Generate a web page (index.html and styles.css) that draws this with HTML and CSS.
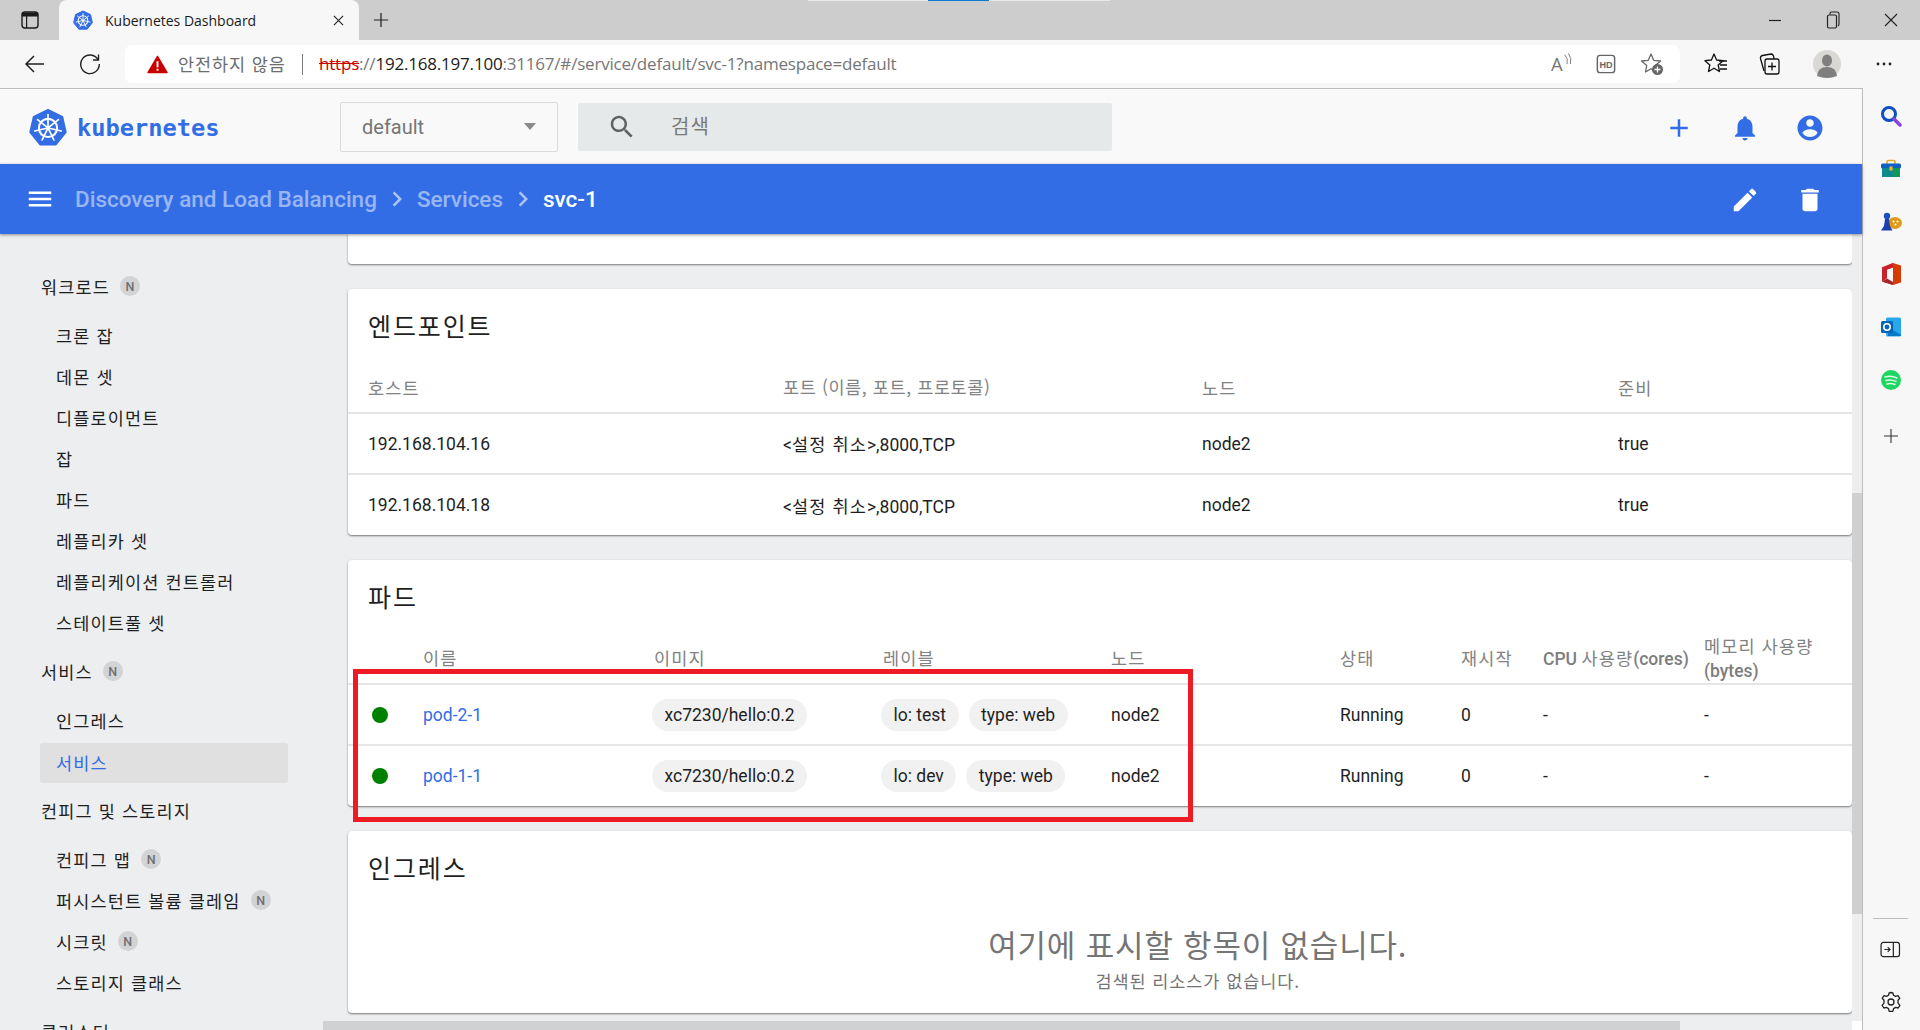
FILE: index.html
```html
<!DOCTYPE html>
<html lang="ko">
<head>
<meta charset="utf-8">
<title>Kubernetes Dashboard</title>
<link rel="stylesheet" href="styles.css">
</head>
<body>
<svg class="defs" width="0" height="0">
  <symbol id="k8s" viewBox="0 0 40 40">
    <path d="M20 2 35 9.2 38.7 25.4 28.3 38.4H11.7L1.3 25.4 5 9.2Z" fill="#326de6" stroke="#326de6" stroke-width="2" stroke-linejoin="round"/>
    <circle cx="20" cy="21" r="9.6" fill="none" stroke="#fff" stroke-width="2.2"/>
    <circle cx="20" cy="21" r="2.4" fill="#fff"/>
    <path d="M20 7V18.5M31 12.2 22 19.4M34 24.2 22.5 21.6M26.2 33.6 21.1 23.3M13.8 33.6 18.9 23.3M6 24.2 17.5 21.6M9 12.2 18 19.4" stroke="#fff" stroke-width="1.8" stroke-linecap="round" fill="none"/>
  </symbol>
</svg>

<div class="titlebar">
  <span class="capture-strip"></span>
  <div class="tabs-btn">
    <svg viewBox="0 0 20 20" class="i20"><rect x="2" y="2" width="16" height="16" rx="3" fill="none" stroke="#1b1b1b" stroke-width="1.4"/><path d="M2.5 3h15v3h-15zM6.6 6v12" fill="#1b1b1b" stroke="#1b1b1b" stroke-width="1.2"/></svg>
  </div>
  <div class="tab">
    <svg class="favicon"><use href="#k8s"/></svg>
    <span class="tab-title">Kubernetes Dashboard</span>
    <svg viewBox="0 0 12 12" class="tab-close"><path d="M1 1 11 11M11 1 1 11" stroke="#222" stroke-width="1.2"/></svg>
  </div>
  <svg viewBox="0 0 18 18" class="newtab"><path d="M9 1V17M1 9H17" stroke="#222" stroke-width="1.4"/></svg>
  <div class="winbtns">
    <svg viewBox="0 0 14 14" class="i14"><path d="M1 7.5H13" stroke="#222" stroke-width="1.2"/></svg>
    <svg viewBox="0 0 14 18" class="i14 tall"><rect x="1.5" y="4" width="9" height="13" rx="1.5" fill="none" stroke="#222" stroke-width="1.2"/><path d="M4 3.5V2.5Q4 1 5.5 1H11Q13 1 13 3V13Q13 14.500 12 15" fill="none" stroke="#222" stroke-width="1.1"/></svg>
    <svg viewBox="0 0 14 14" class="i14"><path d="M1 1 13 13M13 1 1 13" stroke="#222" stroke-width="1.1"/></svg>
  </div>
</div>

<div class="toolbar">
  <svg viewBox="0 0 22 22" class="back"><path d="M20 11H2M10 3 2 11 10 19" fill="none" stroke="#222" stroke-width="1.5"/></svg>
  <svg viewBox="0 0 22 22" class="reload"><path d="M19 6.500A9.300 9.300 0 1 0 20.300 11M19.500 1.500V7H14" fill="none" stroke="#222" stroke-width="1.4"/></svg>
  <div class="addressbar">
    <svg viewBox="0 0 22 20" class="warn"><path d="M11 1.500 21 18.500H1Z" fill="#c80000" stroke="#c80000" stroke-width="1.500" stroke-linejoin="round"/><path d="M11 6.500V13M11 14.500V16.500" stroke="#fff" stroke-width="2"/></svg>
    <span class="insecure ko">안전하지 않음</span>
    <span class="addr-sep"></span>
    <span class="url"><span class="scheme">https</span>://<span class="host">192.168.197.100</span>:31167/#/service/default/svc-1?namespace=default</span>
    <span class="grow"></span>
    <svg viewBox="0 0 26 26" class="addr-ico read"><text x="1" y="21" class="read-a">A</text><path d="M16 3Q20 7 18.500 13M20 1.500Q24 7 22 13" fill="none" stroke="#777" stroke-width="1"/></svg>
    <svg viewBox="0 0 22 22" class="addr-ico hd"><rect x="1.500" y="1.500" width="19" height="19" rx="3" fill="none" stroke="#666" stroke-width="1.600"/><text x="11" y="15" text-anchor="middle" class="hd-t">HD</text></svg>
    <svg viewBox="0 0 24 24" class="addr-ico star"><path d="M11 2 13.700 8.300 20.500 9 15.300 13.500 16.500 20 11 16.700 5.500 20 6.700 13.500 1.500 9 8.300 8.300Z" fill="none" stroke="#666" stroke-width="1.300" stroke-linejoin="round"/><circle cx="17.500" cy="17.500" r="5.500" fill="#666"/><path d="M17.500 14.500V20.500M14.500 17.500H20.500" stroke="#fff" stroke-width="1.300"/></svg>
  </div>
  <svg viewBox="0 0 24 24" class="tool-ico fav"><path d="M10 2 12.600 8 19 8.700 14.200 13 15.500 19.500 10 16.200 4.500 19.500 5.800 13 1 8.700 7.400 8Z" fill="none" stroke="#111" stroke-width="1.300" stroke-linejoin="round"/><path d="M15 9H23M16 13H23M16 17H23" stroke="#111" stroke-width="1.300"/></svg>
  <svg viewBox="0 0 24 24" class="tool-ico coll"><path d="M7 19 3.500 6.500Q3 4 5.500 3.500L14 2Q16 2 16.500 4L17 7" fill="none" stroke="#111" stroke-width="1.300"/><rect x="8" y="7" width="14" height="15" rx="2" fill="#f7f7f7" stroke="#111" stroke-width="1.300"/><path d="M15 10.500V18.500M11 14.500H19" stroke="#111" stroke-width="1.300"/></svg>
  <svg viewBox="0 0 28 28" class="avatar"><circle cx="14" cy="14" r="14" fill="#d9d8d5"/><ellipse cx="14" cy="10.500" rx="5" ry="6" fill="#7f7f7f"/><path d="M4 26Q5 17 14 17 23 17 24 26 19 28 14 28 9 28 4 26Z" fill="#7f7f7f"/></svg>
  <svg viewBox="0 0 18 6" class="more"><circle cx="3" cy="3" r="1.400" fill="#222"/><circle cx="9" cy="3" r="1.400" fill="#222"/><circle cx="15" cy="3" r="1.400" fill="#222"/></svg>
</div>

<div class="workspace">
  <div class="page">
    <header class="app-header">
      <div class="brand">
        <svg class="brand-logo"><use href="#k8s"/></svg>
        <span class="brand-name">kubernetes</span>
      </div>
      <div class="ns-select"><span>default</span><span class="ns-arrow"></span></div>
      <div class="search">
        <svg viewBox="0 0 24 24" class="search-ico"><path d="M15.500 14h-.79l-.28-.27C15.410 12.590 16 11.110 16 9.500 16 5.910 13.090 3 9.500 3S3 5.910 3 9.500 5.910 16 9.500 16c1.610 0 3.090-.59 4.230-1.570l.27.28v.79l5 4.990L20.490 19l-4.990-5zm-6 0C7.010 14 5 11.990 5 9.500S7.010 5 9.500 5 14 7.010 14 9.500 11.990 14 9.500 14z"/></svg>
        <span class="search-ph ko">검색</span>
      </div>
      <span class="grow"></span>
      <div class="actions blue-ico">
        <span class="act"><svg viewBox="0 0 24 24"><path d="M19 13h-6v6h-2v-6H5v-2h6V5h2v6h6v2z"/></svg></span>
        <span class="act"><svg viewBox="0 0 24 24"><path d="M12 22c1.100 0 2-.9 2-2h-4c0 1.100.89 2 2 2zm6-6v-5c0-3.070-1.640-5.640-4.500-6.320V4c0-.83-.67-1.500-1.500-1.500s-1.500.67-1.500 1.500v.68C7.630 5.360 6 7.920 6 11v5l-2 2v1h16v-1l-2-2z"/></svg></span>
        <span class="act"><svg viewBox="0 0 24 24"><path d="M12 2C6.480 2 2 6.480 2 12s4.480 10 10 10 10-4.480 10-10S17.520 2 12 2zm0 3c1.660 0 3 1.340 3 3s-1.340 3-3 3-3-1.340-3-3 1.340-3 3-3zm0 14.200c-2.500 0-4.710-1.280-6-3.220.03-1.990 4-3.080 6-3.080 1.990 0 5.970 1.090 6 3.080-1.290 1.940-3.500 3.220-6 3.220z"/></svg></span>
      </div>
    </header>
    <div class="crumbbar">
      <svg viewBox="0 0 24 24" class="menu"><path d="M3 18h18v-2H3v2zm0-5h18v-2H3v2zm0-7v2h18V6H3z"/></svg>
      <span class="crumb">Discovery and Load Balancing</span>
      <svg viewBox="0 0 24 24" class="chev"><path d="M10 6 8.590 7.410 13.170 12l-4.580 4.590L10 18l6-6z"/></svg>
      <span class="crumb">Services</span>
      <svg viewBox="0 0 24 24" class="chev"><path d="M10 6 8.590 7.410 13.170 12l-4.580 4.590L10 18l6-6z"/></svg>
      <span class="crumb current">svc-1</span>
      <span class="grow"></span>
      <div class="actions white-ico">
        <span class="act"><svg viewBox="0 0 24 24"><path d="M3 17.250V21h3.750L17.810 9.940l-3.750-3.750L3 17.250zM20.710 7.040c.39-.39.39-1.020 0-1.410l-2.340-2.340c-.39-.39-1.020-.39-1.410 0l-1.830 1.830 3.750 3.750 1.830-1.830z"/></svg></span>
        <span class="act"><svg viewBox="0 0 24 24"><path d="M6 19c0 1.100.9 2 2 2h8c1.100 0 2-.9 2-2V7H6v12zM19 4h-3.500l-1-1h-5l-1 1H5v2h14V4z"/></svg></span>
      </div>
    </div>
    <div class="content">
      <nav class="sidenav">
        <div class="nav-section">
          <div class="nav-title"><span class="ko">워크로드</span><span class="badge">N</span></div>
          <a class="nav-item ko">크론 잡</a>
          <a class="nav-item ko">데몬 셋</a>
          <a class="nav-item ko">디플로이먼트</a>
          <a class="nav-item ko">잡</a>
          <a class="nav-item ko">파드</a>
          <a class="nav-item ko">레플리카 셋</a>
          <a class="nav-item ko">레플리케이션 컨트롤러</a>
          <a class="nav-item ko">스테이트풀 셋</a>
        </div>
        <div class="nav-section">
          <div class="nav-title"><span class="ko">서비스</span><span class="badge">N</span></div>
          <a class="nav-item ko">인그레스</a>
          <a class="nav-item ko selected">서비스</a>
        </div>
        <div class="nav-section">
          <div class="nav-title"><span class="ko">컨피그 및 스토리지</span></div>
          <a class="nav-item"><span class="ko">컨피그 맵</span><span class="badge">N</span></a>
          <a class="nav-item"><span class="ko">퍼시스턴트 볼륨 클레임</span><span class="badge">N</span></a>
          <a class="nav-item"><span class="ko">시크릿</span><span class="badge">N</span></a>
          <a class="nav-item ko">스토리지 클래스</a>
        </div>
        <div class="nav-section">
          <div class="nav-title"><span class="ko">클러스터</span></div>
        </div>
      </nav>
      <main class="main">
        <section class="card card-stub"></section>

        <section class="card">
          <h2 class="card-title ko">엔드포인트</h2>
          <table class="tbl">
            <colgroup><col class="e1"><col class="e2"><col class="e3"><col></colgroup>
            <thead><tr><th class="ko">호스트</th><th><span class="ko tight">포트 (이름, 포트, 프로토콜)</span></th><th class="ko">노드</th><th class="ko">준비</th></tr></thead>
            <tbody>
              <tr><td>192.168.104.16</td><td>&lt;<span class="ko">설정 취소</span>&gt;,8000,TCP</td><td>node2</td><td>true</td></tr>
              <tr><td>192.168.104.18</td><td>&lt;<span class="ko">설정 취소</span>&gt;,8000,TCP</td><td>node2</td><td>true</td></tr>
            </tbody>
          </table>
        </section>

        <section class="card">
          <h2 class="card-title ko">파드</h2>
          <table class="tbl pods">
            <colgroup><col class="p0"><col class="p1"><col class="p2"><col class="p3"><col class="p4"><col class="p5"><col class="p6"><col class="p7"><col></colgroup>
            <thead><tr><th></th><th class="ko">이름</th><th class="ko">이미지</th><th class="ko">레이블</th><th class="ko">노드</th><th class="ko">상태</th><th class="ko">재시작</th><th class="nowrap">CPU <span class="ko">사용량</span>(cores)</th><th><span class="ko">메모리 사용량</span> (bytes)</th></tr></thead>
            <tbody>
              <tr><td class="dot-cell"><span class="dot"></span></td><td><a class="link">pod-2-1</a></td><td><span class="chip first">xc7230/hello:0.2</span></td><td><span class="chip first">lo: test</span><span class="chip">type: web</span></td><td>node2</td><td>Running</td><td>0</td><td>-</td><td>-</td></tr>
              <tr><td class="dot-cell"><span class="dot"></span></td><td><a class="link">pod-1-1</a></td><td><span class="chip first">xc7230/hello:0.2</span></td><td><span class="chip first">lo: dev</span><span class="chip">type: web</span></td><td>node2</td><td>Running</td><td>0</td><td>-</td><td>-</td></tr>
            </tbody>
          </table>
        </section>

        <section class="card card-empty">
          <h2 class="card-title ko">인그레스</h2>
          <div class="empty-big ko">여기에 표시할 항목이 없습니다.</div>
          <div class="empty-small ko">검색된 리소스가 없습니다.</div>
        </section>
      </main>
      <div class="annotation"></div>
      <div class="vscroll"><div class="vthumb"></div></div>
      <div class="hscroll"></div>
      <div class="scroll-corner"></div>
    </div>
  </div>

  <aside class="rail">
    <svg viewBox="0 0 22 22" class="rail-ico"><circle cx="9" cy="9" r="6.500" fill="none" stroke="#0f4fc4" stroke-width="3"/><path d="M14 14 20 20" stroke="#8a3fe0" stroke-width="3.500" stroke-linecap="round"/></svg>
    <svg viewBox="0 0 22 22" class="rail-ico"><path d="M7 6V3.500Q7 2.500 8 2.500H14Q15 2.500 15 3.500V6" fill="none" stroke="#e8a92a" stroke-width="1.600"/><rect x="1" y="5.500" width="20" height="5" rx="1.500" fill="#0f5fc4"/><rect x="2" y="10" width="18" height="9" fill="#0e8a8a"/><rect x="13" y="10" width="7" height="9" fill="#0f9a5a"/><rect x="9.500" y="8.500" width="3" height="4" fill="#f5b92b"/></svg>
    <svg viewBox="0 0 22 22" class="rail-ico"><ellipse cx="15" cy="12" rx="7" ry="6" fill="#e09a1a"/><circle cx="13.500" cy="10.500" r="1" fill="#fff"/><circle cx="17.500" cy="10.500" r="1" fill="#fff"/><circle cx="15.500" cy="13.500" r="1" fill="#fff"/><circle cx="7" cy="5" r="3.200" fill="#1c4fc0"/><path d="M5 8H9L10 15 12.500 19.500H1L4 15Z" fill="#1c3fb0"/></svg>
    <svg viewBox="0 0 22 24" class="rail-ico office"><path d="M13 1 21 3.500V20.500L13 23 2 19.500 13 20V5.500L7 7.500V16L2 19.500V5.500Z" fill="#d83b01"/><path d="M13 1 2 5.500V19.500L7 16V7.500L13 5.500Z" fill="#c8202e"/><path d="M2 19.500 7 16.500 13 20V23Z" fill="#a4262c"/></svg>
    <svg viewBox="0 0 22 22" class="rail-ico"><rect x="6" y="1.500" width="15" height="19" rx="1.500" fill="#28a8ea"/><path d="M8 11 21 19V20H8Z" fill="#0a78c8"/><rect x="1" y="5" width="12" height="12" rx="1.500" fill="#0364b8"/><circle cx="7" cy="11" r="3.200" fill="none" stroke="#fff" stroke-width="1.600"/></svg>
    <svg viewBox="0 0 22 22" class="rail-ico"><circle cx="11" cy="11" r="10" fill="#1ed760"/><path d="M5 8Q11 6 17 9M6 11.500Q11 10 16 12.500M7 15Q11 13.800 15 15.500" fill="none" stroke="#fff" stroke-width="1.400" stroke-linecap="round" opacity=".85"/></svg>
    <svg viewBox="0 0 16 16" class="rail-plus"><path d="M8 1V15M1 8H15" stroke="#333" stroke-width="1.100"/></svg>
    <span class="grow"></span>
    <span class="rail-div"></span>
    <svg viewBox="0 0 22 18" class="rail-exp"><rect x="1" y="1.500" width="19.500" height="15" rx="2.500" fill="none" stroke="#222" stroke-width="1.300"/><path d="M14 1.500V16.500" stroke="#222" stroke-width="1.300"/><path d="M4.500 9H10.500M8 6.500 10.500 9 8 11.500" fill="none" stroke="#222" stroke-width="1.200"/></svg>
    <svg viewBox="0 0 24 24" class="rail-gear"><path d="M12 2.500 13.800 2.800 14.500 5.300 16.500 6.400 19 5.700 20.800 8.300 19 10.200V13.100L20.900 15.300 19.200 18 16.700 17.400 14.600 18.600 13.800 21.300H10.200L9.500 18.600 7.400 17.400 4.900 18 3.100 15.300 5 13.100V10.200L3.200 8.300 5 5.700 7.500 6.400 9.500 5.300 10.200 2.800Z" fill="none" stroke="#222" stroke-width="1.300" stroke-linejoin="round"/><circle cx="12" cy="12" r="3" fill="none" stroke="#222" stroke-width="1.300"/></svg>
  </aside>
</div>
</body>
</html>
```
FILE: styles.css
```css
* { box-sizing: border-box; }
html, body { margin: 0; height: 100%; overflow: hidden; }
body {
  width: 1920px;
  height: 1030px;
  display: flex;
  flex-direction: column;
  font-family: Roboto, "Noto Sans CJK KR", sans-serif;
  font-size: 17.5px;
  color: #1f1f1f;
  background: #f7f7f7;
}
.defs { position: absolute; }
.grow { flex: 1; }
.ko { letter-spacing: 1.15px; font-family: "Noto Sans CJK KR", Roboto, sans-serif; font-weight: 400; }
.ko.tight { letter-spacing: .6px; }

/* browser chrome */
.titlebar {
  height: 40px;
  background: #cdcdcd;
  display: flex;
  align-items: center;
  position: relative;
  flex: none;
}
.capture-strip {
  position: absolute;
  left: 808px;
  top: 0;
  width: 302px;
  height: 1px;
  background: linear-gradient(90deg, #e8e8e8 0 120px, #0a78d4 120px 181px, #e8e8e8 181px);
}
.tabs-btn { width: 59px; height: 40px; display: flex; align-items: center; justify-content: center; padding-left: 1px; }
.i20 { width: 20px; height: 20px; }
.tab {
  width: 300px;
  height: 40px;
  background: #f7f7f7;
  border-radius: 8px 8px 0 0;
  display: flex;
  align-items: center;
  padding-left: 14px;
  flex: none;
}
.favicon { width: 20px; height: 20px; flex: none; }
.tab-title { font: 14px "Open Sans", sans-serif; margin-left: 12px; width: 228px; flex: none; color: #1b1b1b; }
.tab-close { width: 11px; height: 11px; flex: none; }
.newtab { width: 16px; height: 16px; margin-left: 14px; }
.winbtns { margin-left: auto; display: flex; align-items: center; }
.i14 { width: 14px; height: 14px; margin-right: 44px; }
.i14.tall { height: 18px; }
.winbtns .i14:last-child { margin-right: 22px; }

.toolbar {
  height: 48px;
  flex: none;
  display: flex;
  align-items: center;
  background: #f7f7f7;
}
.back { width: 22px; height: 22px; margin-left: 24px; }
.reload { width: 22px; height: 22px; margin-left: 33px; }
.addressbar {
  width: 1555px;
  height: 38px;
  margin-left: 24px;
  background: #fff;
  border-radius: 7px;
  display: flex;
  align-items: center;
  padding-left: 22px;
  padding-right: 16px;
}
.warn { width: 21px; height: 19px; flex: none; }
.insecure { font-size: 17.5px; color: #6d6d6d; margin-left: 10px; letter-spacing: .9px; width: 110px; white-space: nowrap; margin-top: -2px; }
.addr-sep { width: 1px; height: 21px; background: #777; margin-left: 14px; }
.url { font: 17px "Open Sans", sans-serif; color: #767676; margin-left: 16px; margin-top: -2px; letter-spacing: -.2px; white-space: nowrap; }
.scheme { color: #c80000; text-decoration: line-through; }
.host { color: #1b1b1b; }
.addr-ico { flex: none; }
.read { width: 24px; height: 24px; margin-right: 22px; }
.read-a { font: 20px "Open Sans", sans-serif; fill: #777; }
.hd { width: 20px; height: 20px; margin-right: 24px; }
.hd-t { font: bold 10px "Liberation Sans", sans-serif; fill: #666; }
.star { width: 24px; height: 24px; }
.tool-ico { width: 24px; height: 24px; flex: none; }
.fav { margin-left: 24px; }
.coll { margin-left: 29px; }
.avatar { width: 28px; height: 28px; margin-left: 32px; }
.more { width: 18px; height: 6px; margin-left: 34px; }

.workspace { flex: 1; display: flex; min-height: 0; }
.page {
  width: 1863px;
  border-top: 1px solid #bdbdbd;
  border-right: 1px solid #bdbdbd;
  display: flex;
  flex-direction: column;
  position: relative;
}

/* app header */
.app-header {
  height: 75px;
  background: #f9f9f9;
  display: flex;
  align-items: center;
  flex: none;
}
.brand { width: 340px; display: flex; align-items: center; padding-left: 29px; }
.brand-logo { width: 38px; height: 38px; flex: none; }
.brand-name { font: bold 23.7px "DejaVu Sans Mono", monospace; color: #326de6; margin-left: 10px; margin-top: 2px; }
.ns-select {
  width: 218px;
  height: 50px;
  border: 1px solid #dcdcdc;
  border-radius: 2px;
  display: flex;
  align-items: center;
  justify-content: space-between;
  padding: 0 21px;
  font-size: 20px;
  color: #757575;
  margin-right: 20px;
}
.ns-arrow { width: 0; height: 0; border: 6px solid transparent; border-top: 7px solid #8a8a8a; border-bottom: 0; }
.search {
  width: 534px;
  height: 48px;
  background: #e6e9ea;
  border-radius: 2px;
  display: flex;
  align-items: center;
  padding-left: 29px;
}
.search-ico { width: 30px; height: 30px; fill: #616161; }
.search-ph { font-size: 20px; color: #7a7a7a; margin-left: 34px; margin-top: -3px; letter-spacing: 1px; }
.actions { display: flex; margin-right: 19px; }
.act { width: 65.500px; height: 48px; display: flex; align-items: center; justify-content: center; }
.act svg { width: 30px; height: 30px; }
.blue-ico { margin-top: 2px; }
.blue-ico svg { fill: #326de6; }
.white-ico { margin-top: 2px; }
.white-ico svg { fill: #fff; }

/* breadcrumb bar */
.crumbbar {
  height: 70px;
  flex: none;
  background: #326de6;
  display: flex;
  align-items: center;
  padding-left: 25px;
  box-shadow: 0 1px 3px rgba(0,0,0,.4);
  position: relative;
  z-index: 2;
}
.menu { width: 30px; height: 30px; fill: #fff; margin-right: 20px; }
.crumb { font-size: 22.500px; font-weight: 500; color: rgba(255,255,255,.5); }
.crumb.current { color: #fff; }
.chev { width: 30px; height: 30px; fill: rgba(255,255,255,.6); margin: 0 5px; }

/* content */
.content { flex: 1; min-height: 0; display: flex; background: #edeef0; position: relative; overflow: hidden; }
.sidenav { width: 323px; flex: none; padding: 23.500px 35px 0 40px; overflow: hidden; }
.nav-section { margin-top: 8px; }
.nav-title { height: 41px; display: flex; align-items: center; margin-bottom: 8px; padding-left: 1px; white-space: nowrap; }
.nav-item { height: 41px; display: flex; align-items: center; padding-left: 16px; border-radius: 3px; white-space: nowrap; }
.nav-item.selected { background: #e0e0e0; color: #326de6; height: 40px; margin: 2px 0 -1px; }
.badge {
  width: 20px;
  height: 20px;
  border-radius: 50%;
  background: #d2d3d5;
  color: #6f6f6f;
  font: 500 12.500px Roboto, sans-serif;
  display: flex;
  align-items: center;
  justify-content: center;
  margin-left: 10px;
}
.main { flex: 1; min-width: 0; display: flex; flex-direction: column; gap: 25px; padding: 0 10.500px 0 25px; overflow: hidden; }
.card { background: #fff; border-radius: 4px; box-shadow: 0 1px 2px rgba(0,0,0,.5); flex: none; }
.card-stub { height: 30px; border-radius: 0 0 4px 4px; }
.card-title { margin: 0; height: 61px; padding: 20px 20px 0; font-size: 25px; line-height: 32px; white-space: nowrap; letter-spacing: 1.900px; }
.tbl { width: 100%; border-collapse: collapse; table-layout: fixed; }
.tbl th, .tbl td { padding: 0 0 0 20px; text-align: left; }
.tbl th { color: #7d7d7d; font-weight: 500; height: 63px; line-height: 24px; vertical-align: middle; padding-top: 13px; }
.tbl th.ko { color: #828282; font-weight: 400; }
.tbl th .ko { color: #828282; }
.tbl td { height: 61px; border-top: 2px solid #e5e5e5; }
.pods th { height: 63px; padding-top: 12px; }
.e1 { width: 415px; }
.e2 { width: 419px; }
.e3 { width: 416px; }
.p0 { width: 55px; }
.p1 { width: 231px; }
.p2 { width: 229px; }
.p3 { width: 228px; }
.p4 { width: 229px; }
.p5 { width: 121px; }
.p6 { width: 82px; }
.p7 { width: 161px; }
.nowrap { white-space: nowrap; }
.tbl .dot-cell { padding-left: 24px; }
.dot { display: block; width: 16px; height: 16px; border-radius: 50%; background: #008000; }
.link { color: #326de6; }
.chip {
  display: inline-flex;
  align-items: center;
  height: 32px;
  padding: 0 12.500px;
  border-radius: 16px;
  background: #f1f1f1;
  margin-left: 10px;
  white-space: nowrap;
}
.chip.first { margin-left: -2px; }
.card-empty { height: 182px; }
.empty-big { padding-left: 196px; text-align: center; font-size: 31px; line-height: 40px; color: #757575; margin-top: 32px; letter-spacing: .8px; white-space: nowrap; }
.empty-small { padding-left: 196px; text-align: center; font-size: 17.500px; line-height: 22px; color: #757575; margin-top: 6px; letter-spacing: .9px; }

.annotation {
  position: absolute;
  left: 353px;
  top: 435px;
  width: 840px;
  height: 153px;
  border: 5px solid #ed1c24;
  pointer-events: none;
}
.vscroll { position: absolute; right: 0; top: 0; bottom: 9px; width: 10.500px; background: #edeef0; }
.vthumb { height: 421px; margin-top: 259px; background: #cfd0d2; }
.hscroll { position: absolute; left: 323px; bottom: 0; width: 1357px; height: 9px; background: #d0d1d3; }
.scroll-corner { position: absolute; right: 0; bottom: 0; width: 10.500px; height: 9px; background: #fff; }

/* right rail */
.rail {
  width: 57px;
  flex: none;
  background: #f7f7f7;
  display: flex;
  flex-direction: column;
  align-items: center;
  padding: 17px 2px 16px 0;
}
.rail-ico { width: 22px; height: 22px; flex: none; margin-bottom: 30.750px; }
.rail-ico.office { height: 24px; margin-top: -1px; margin-bottom: 29.750px; }
.rail-plus { width: 16px; height: 16px; margin-top: 6px; flex: none; }
.rail-div { width: 35px; height: 1px; background: #bdbdbd; margin-bottom: 22px; }
.rail-exp { width: 21px; height: 17px; margin-bottom: 32px; }
.rail-gear { width: 24px; height: 24px; }
```
